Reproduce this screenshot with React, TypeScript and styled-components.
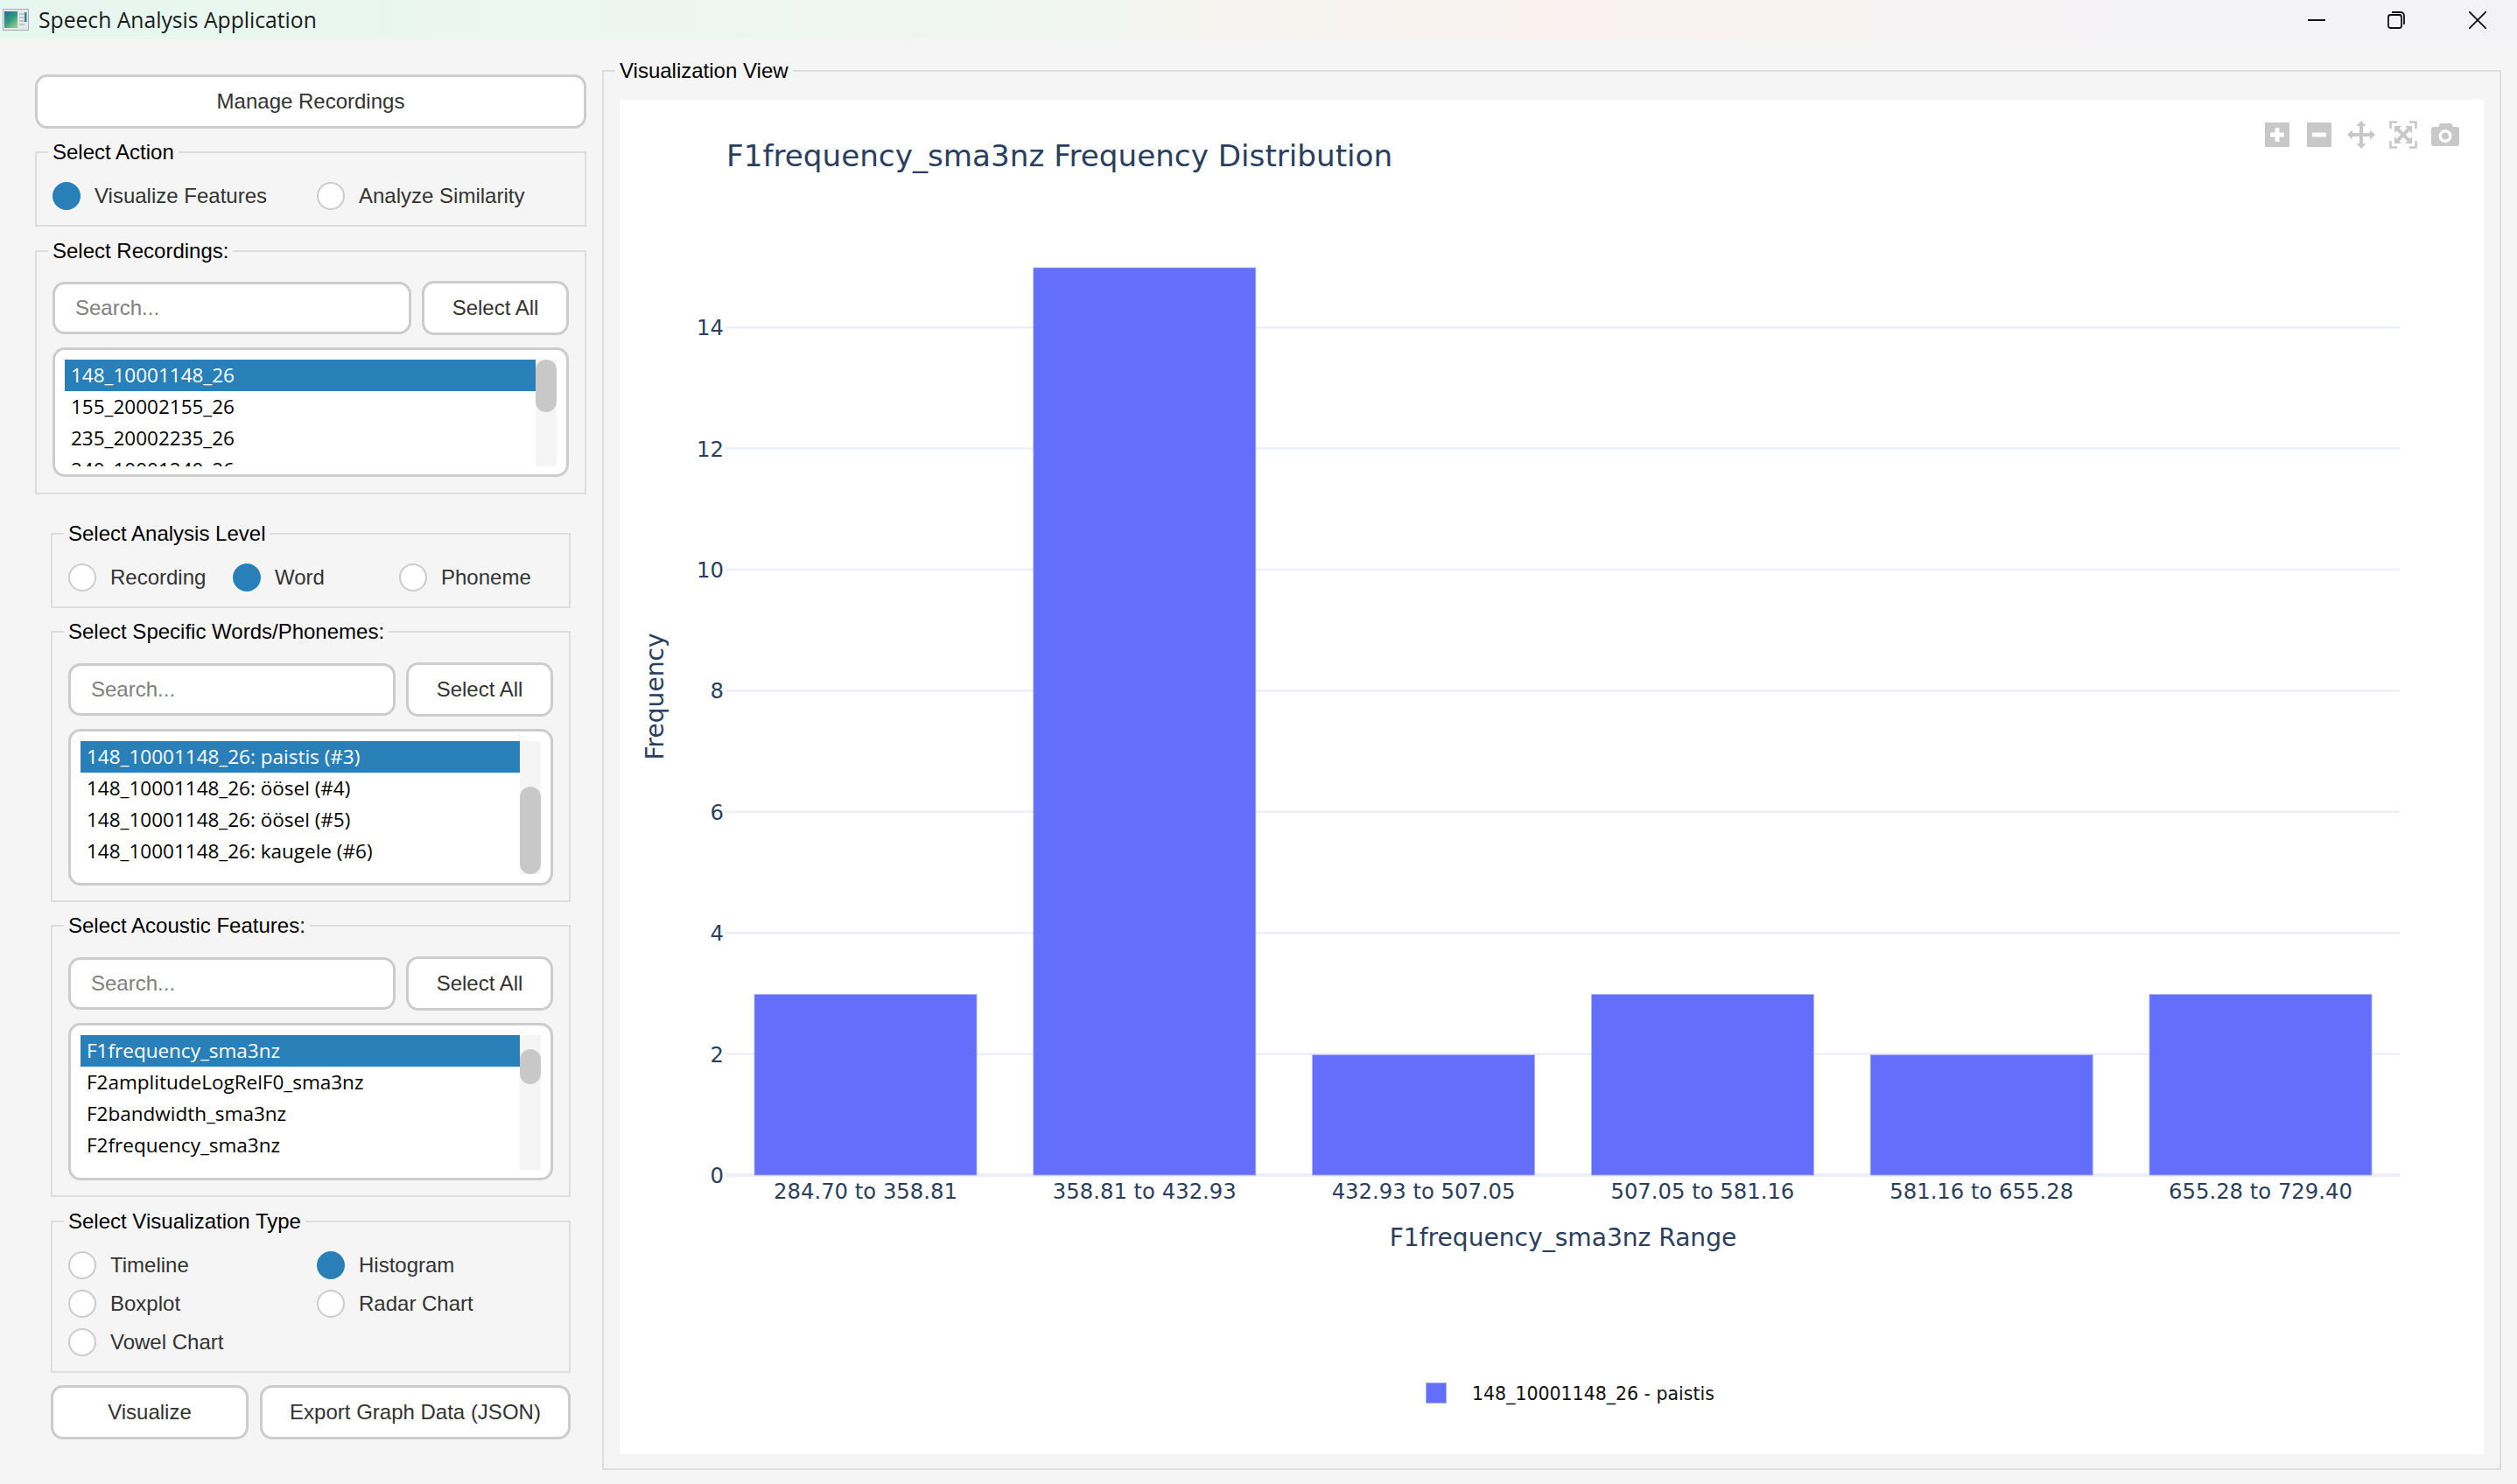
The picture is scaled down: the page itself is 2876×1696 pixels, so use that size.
import React from 'react'
import styled, {createGlobalStyle} from 'styled-components'

const GlobalStyle = createGlobalStyle`
  html, body {
    margin: 0;
    padding: 0;
    background: #F5F5F5;
  }
  * {
    box-sizing: border-box;
  }
`
const Page = styled.div`
  width: 2876px;
  height: 1696px;
  overflow: hidden;
  display: flex;
  flex-direction: column;
  font-family: "Liberation Sans", Arial, sans-serif;
`
const TitleBar = styled.div`
  height: 45px;
  flex: none;
  display: flex;
  align-items: center;
  padding-left: 3px;
  background: linear-gradient(90deg, #E6F7EF 0%, #EEF6EF 35%, #FBF1F0 62%, #F4F3F5 85%, #F3F3F5 100%);
`
const AppTitle = styled.div`
  margin-left: 11px;
  font-family: "Open Sans", sans-serif;
  font-size: 24.7px;
  color: #1A1A1A;
  flex: 1;
`
const WindowButton = styled.div<{$w: number}>`
  width: ${p => p.$w}px;
  display: flex;
  justify-content: center;
  align-items: center;
  color: #111;
`
const Main = styled.div`
  flex: 1;
  display: flex;
  padding: 0 18px 0 40px;
  gap: 18px;
`
const Sidebar = styled.div`
  width: 630px;
  padding-top: 40px;
  display: flex;
  flex-direction: column;
`
const Indented = styled.div`
  padding: 0 18px;
  margin-top: 32px;
  display: flex;
  flex-direction: column;
  gap: 14px;
`
const Top = styled.div`
  display: flex;
  flex-direction: column;
  gap: 14px;
`
const Group = styled.fieldset<{$pt?: number, $pb?: number, $mt?: number}>`
  margin: ${p => p.$mt || 0}px 0 0;
  min-width: 0;
  border: 2px solid #DDDDDD;
  padding: ${p => p.$pt ?? 21}px 18px ${p => p.$pb ?? 17}px 18px;
`
const GroupTitle = styled.legend`
  height: 26px;
  line-height: 26px;
  padding: 0 5px;
  margin-left: -5px;
  font-size: 24px;
  color: #000;
  white-space: nowrap;
`
const Button = styled.div<{$h?: number, $w?: number, $fill?: boolean}>`
  height: ${p => p.$h || 62}px;
  ${p => p.$w ? `width: ${p.$w}px;` : ''}
  ${p => p.$fill ? 'flex: 1;' : ''}
  flex-shrink: 0;
  display: flex;
  align-items: center;
  justify-content: center;
  background: #FFFFFF;
  border: 3px solid #CCCCCC;
  border-radius: 14px;
  font-size: 24px;
  color: #333333;
`
const SearchRow = styled.div`
  display: flex;
  align-items: center;
  gap: 12px;
  height: 62px;
`
const SearchInput = styled.div`
  flex: 1;
  height: 60px;
  display: flex;
  align-items: center;
  padding-left: 23px;
  background: #FFFFFF;
  border: 3px solid #CCCCCC;
  border-radius: 14px;
  font-size: 24px;
  color: #808080;
`
const ListBox = styled.div<{$h: number}>`
  height: ${p => p.$h}px;
  margin-top: 14px;
  padding: 11px 11px 0;
  display: flex;
  align-items: flex-start;
  background: #FFFFFF;
  border: 3px solid #CCCCCC;
  border-radius: 14px;
`
const Rows = styled.div<{$h: number}>`
  flex: 1;
  height: ${p => p.$h}px;
  overflow: hidden;
`
const Row = styled.div<{$selected?: boolean}>`
  height: 36px;
  line-height: 36px;
  padding-left: 7px;
  font-family: "Open Sans", sans-serif;
  font-size: 22.5px;
  white-space: nowrap;
  color: ${p => p.$selected ? '#FFFFFF' : '#000000'};
  background: ${p => p.$selected ? '#2980B9' : 'transparent'};
`
const ScrollTrack = styled.div<{$h: number}>`
  width: 24px;
  height: ${p => p.$h}px;
  background: #F5F5F5;
`
const ScrollThumb = styled.div<{$top: number, $h: number}>`
  height: ${p => p.$h}px;
  margin-top: ${p => p.$top}px;
  background: #C8C8C8;
  border-radius: 12px;
`
const RadioLine = styled.div`
  display: flex;
  align-items: center;
  height: 32px;
`
const RadioGrid = styled.div<{$columns: string}>`
  display: grid;
  grid-template-columns: ${p => p.$columns};
  row-gap: 12px;
`
const RadioCircle = styled.div<{$on?: boolean}>`
  width: 32px;
  height: 32px;
  flex: none;
  border-radius: 50%;
  background: ${p => p.$on ? '#2980B9' : '#FFFFFF'};
  border: 2.5px solid ${p => p.$on ? '#2980B9' : '#CCCCCC'};
`
const RadioText = styled.div`
  margin-left: 16px;
  font-size: 24px;
  color: #333333;
  white-space: nowrap;
`
const BottomButtons = styled.div`
  display: flex;
  gap: 13px;
`
const ChartPanel = styled(Group)`
  flex: 1;
  margin-top: 23px;
  height: 1612px;
  padding: 20px 18px 16px 18px;
`
const ChartArea = styled.div`
  position: relative;
  width: 2130px;
  height: 1548px;
  background: #FFFFFF;
`
const ChartSvg = styled.svg`
  display: block;
  font-family: "DejaVu Sans", Verdana, sans-serif;
`
const ModeBar = styled.div`
  position: absolute;
  top: 24px;
  right: 28px;
  display: flex;
  align-items: center;
  gap: 16px;
  color: #C8C8C8;
`
const ModeIcon = styled.svg<{$ml?: number}>`
  display: block;
  margin-left: ${p => p.$ml || 0}px;
`

type RadioProps = {label: string, on?: boolean}
const Radio = ({label, on}: RadioProps) => <RadioLine>
  <RadioCircle $on={on}/>
  <RadioText>{label}</RadioText>
</RadioLine>

type PickListProps = {
  h: number,
  viewH: number,
  trackH: number,
  thumbTop: number,
  thumbH: number,
  rows: string[],
}
const PickList = ({h, viewH, trackH, thumbTop, thumbH, rows}: PickListProps) => <ListBox $h={h}>
  <Rows $h={viewH}>
    {rows.map((row, i) => <Row key={row + i} $selected={i === 0}>{row}</Row>)}
  </Rows>
  <ScrollTrack $h={trackH}>
    <ScrollThumb $top={thumbTop} $h={thumbH}/>
  </ScrollTrack>
</ListBox>

const Search = () => <SearchRow>
  <SearchInput>Search...</SearchInput>
  <Button $w={168}>Select All</Button>
</SearchRow>

const AppIcon = () => <svg width="30" height="25" viewBox="0 0 30 25">
  <defs>
    <linearGradient id="appIconFill" x1="0" y1="0" x2="0.7" y2="1">
      <stop offset="0" stopColor="#1E6F8E"/>
      <stop offset="0.55" stopColor="#2F9A84"/>
      <stop offset="1" stopColor="#8ACB86"/>
    </linearGradient>
  </defs>
  <rect x="0.5" y="0.5" width="29" height="24" fill="#E4E8E8" stroke="#A8B0B2"/>
  <rect x="2" y="3" width="15" height="19" fill="url(#appIconFill)"/>
  <path d="M19 6h6M19 10h6M19 14h6M19 18h6" stroke="#B4BCBE" strokeWidth="1.5"/>
  <rect x="25" y="4" width="2.500" height="11" fill="#3E7FA0"/>
</svg>

const BARS = [
  {label: '284.70 to 358.81', value: 3},
  {label: '358.81 to 432.93', value: 15},
  {label: '432.93 to 507.05', value: 2},
  {label: '507.05 to 581.16', value: 3},
  {label: '581.16 to 655.28', value: 2},
  {label: '655.28 to 729.40', value: 3},
]
const TICKS = [0, 2, 4, 6, 8, 10, 12, 14]
const BASE_Y = 1229
const UNIT = 69.2
const AXIS = '#2A3F5F'
const BAR_FILL = '#636EFA'
const BAR_EDGE = '#A9AFFB'

const Chart = () => <ChartSvg width={2130} height={1548} viewBox="0 0 2130 1548">
  <text x={122} y={76} fontSize={34.200} fill={AXIS}>F1frequency_sma3nz Frequency Distribution</text>
  {TICKS.map(tick => <g key={tick}>
    <line
        x1={121}
        x2={2034}
        y1={BASE_Y - tick * UNIT}
        y2={BASE_Y - tick * UNIT}
        stroke="#EBF0F8"
        strokeWidth={tick === 0 ? 4 : 2.5}
    />
    <text
        x={119}
        y={BASE_Y - tick * UNIT + 9}
        textAnchor="end"
        fontSize={24.300}
        fill={AXIS}
    >{tick}</text>
  </g>)}
  {BARS.map((bar, i) => {
    const x = 154 + i * 318.8
    return <g key={bar.label}>
      <rect
          x={x}
          y={BASE_Y - bar.value * UNIT + 1}
          width={254}
          height={bar.value * UNIT - 1}
          fill={BAR_FILL}
          stroke={BAR_EDGE}
          strokeWidth={0.8}
      />
      <text x={x + 127} y={1256} textAnchor="middle" fontSize={24.300} fill={AXIS}>{bar.label}</text>
    </g>
  })}
  <text x={1078} y={1310} textAnchor="middle" fontSize={28.100} fill={AXIS}>F1frequency_sma3nz Range</text>
  <text
      x={40}
      y={682}
      textAnchor="middle"
      fontSize={28.100}
      fill={AXIS}
      transform="rotate(-90 40 682)"
      dominantBaseline="central"
  >Frequency</text>
  <rect x={921.5} y={1466.5} width={23} height={23} fill={BAR_FILL} stroke={BAR_EDGE}/>
  <text x={974} y={1486} fontSize={20.500} fill="#111111">148_10001148_26 - paistis</text>
</ChartSvg>

const ModeBarIcons = () => <ModeBar>
  <ModeIcon width="28" height="28" viewBox="0 0 28 28">
    <path fill="currentColor" fillRule="evenodd" d="M0 0h28v28H0zM11.500 6v5.500H6v5h5.500V22h5v-5.500H22v-5h-5.500V6z"/>
  </ModeIcon>
  <ModeIcon width="28" height="28" viewBox="0 0 28 28" $ml={4}>
    <path fill="currentColor" fillRule="evenodd" d="M0 0h28v28H0zM6 11.500v5h16v-5z"/>
  </ModeIcon>
  <ModeIcon width="32" height="32" viewBox="0 0 32 32" $ml={2}>
    <path fill="currentColor" d="M16 0l5.500 6H18v8h8v-3.500l6 5.500-6 5.500V18h-8v8h3.500L16 32l-5.500-6H14v-8H6v3.500L0 16l6-5.500V14h8V6h-3.500z"/>
  </ModeIcon>
  <ModeIcon width="32" height="32" viewBox="0 0 32 32">
    <path fill="none" stroke="currentColor" strokeWidth="2.500" d="M9 1.500H1.500V9M23 1.500h7.500V9M9 30.500H1.500V23M23 30.500h7.500V23"/>
    <path fill="currentColor" d="M6 6h8l-2.600 2.600L16 13.200l4.600-4.600L18 6h8v8l-2.600-2.600L18.800 16l4.600 4.600L26 18v8h-8l2.600-2.600L16 18.800l-4.600 4.600L14 26H6v-8l2.600 2.600L13.200 16 8.600 11.400 6 14z"/>
  </ModeIcon>
  <ModeIcon width="32" height="26" viewBox="0 0 32 26">
    <path fill="currentColor" fillRule="evenodd" d="M10 0h13l2 4h4a3 3 0 0 1 3 3v16a3 3 0 0 1-3 3H3a3 3 0 0 1-3-3V7a3 3 0 0 1 3-3h5zM16 7a7.500 7.500 0 1 0 0 15 7.500 7.500 0 0 0 0-15zm0 3.500a4 4 0 1 1 0 8 4 4 0 0 1 0-8z"/>
  </ModeIcon>
</ModeBar>

export default function App() {
  return <Page>
    <GlobalStyle/>
    <TitleBar>
      <AppIcon/>
      <AppTitle>Speech Analysis Application</AppTitle>
      <WindowButton $w={86}>
        <svg width="20" height="20" viewBox="0 0 20 20"><path d="M0 10h20" stroke="currentColor" strokeWidth="2"/></svg>
      </WindowButton>
      <WindowButton $w={96}>
        <svg width="20" height="20" viewBox="0 0 20 20" fill="none" stroke="currentColor" strokeWidth="1.8">
          <rect x="1" y="4" width="15" height="15" rx="2.500"/>
          <path d="M5 1h10a4 4 0 0 1 4 4v10"/>
        </svg>
      </WindowButton>
      <WindowButton $w={90}>
        <svg width="20" height="20" viewBox="0 0 20 20"><path d="M0 0l20 20M20 0L0 20" stroke="currentColor" strokeWidth="1.800"/></svg>
      </WindowButton>
    </TitleBar>
    <Main>
      <Sidebar>
        <Top>
          <Button>Manage Recordings</Button>
          <Group>
            <GroupTitle>Select Action</GroupTitle>
            <RadioGrid $columns="302px 1fr">
              <Radio label="Visualize Features" on/>
              <Radio label="Analyze Similarity"/>
            </RadioGrid>
          </Group>
          <Group $pb={18} $mt={1}>
            <GroupTitle>Select Recordings:</GroupTitle>
            <Search/>
            <PickList
                h={148}
                viewH={122}
                trackH={122}
                thumbTop={0}
                thumbH={60}
                rows={['148_10001148_26', '155_20002155_26', '235_20002235_26', '240_10001240_26']}
            />
          </Group>
        </Top>
        <Indented>
          <Group>
            <GroupTitle>Select Analysis Level</GroupTitle>
            <RadioGrid $columns="188px 190px 1fr">
              <Radio label="Recording"/>
              <Radio label="Word" on/>
              <Radio label="Phoneme"/>
            </RadioGrid>
          </Group>
          <Group $pt={22}>
            <GroupTitle>Select Specific Words/Phonemes:</GroupTitle>
            <Search/>
            <PickList
                h={179}
                viewH={152}
                trackH={152}
                thumbTop={52}
                thumbH={100}
                rows={[
                  '148_10001148_26: paistis (#3)',
                  '148_10001148_26: öösel (#4)',
                  '148_10001148_26: öösel (#5)',
                  '148_10001148_26: kaugele (#6)',
                ]}
            />
          </Group>
          <Group $pt={22}>
            <GroupTitle>Select Acoustic Features:</GroupTitle>
            <Search/>
            <PickList
                h={180}
                viewH={154}
                trackH={154}
                thumbTop={16}
                thumbH={40}
                rows={['F1frequency_sma3nz', 'F2amplitudeLogRelF0_sma3nz', 'F2bandwidth_sma3nz', 'F2frequency_sma3nz']}
            />
          </Group>
          <Group $mt={1}>
            <GroupTitle>Select Visualization Type</GroupTitle>
            <RadioGrid $columns="284px 1fr">
              <Radio label="Timeline"/>
              <Radio label="Histogram" on/>
              <Radio label="Boxplot"/>
              <Radio label="Radar Chart"/>
              <Radio label="Vowel Chart"/>
            </RadioGrid>
          </Group>
          <BottomButtons>
            <Button $w={226}>Visualize</Button>
            <Button $fill>Export Graph Data (JSON)</Button>
          </BottomButtons>
        </Indented>
      </Sidebar>
      <ChartPanel>
        <GroupTitle>Visualization View</GroupTitle>
        <ChartArea>
          <Chart/>
          <ModeBarIcons/>
        </ChartArea>
      </ChartPanel>
    </Main>
  </Page>
}
